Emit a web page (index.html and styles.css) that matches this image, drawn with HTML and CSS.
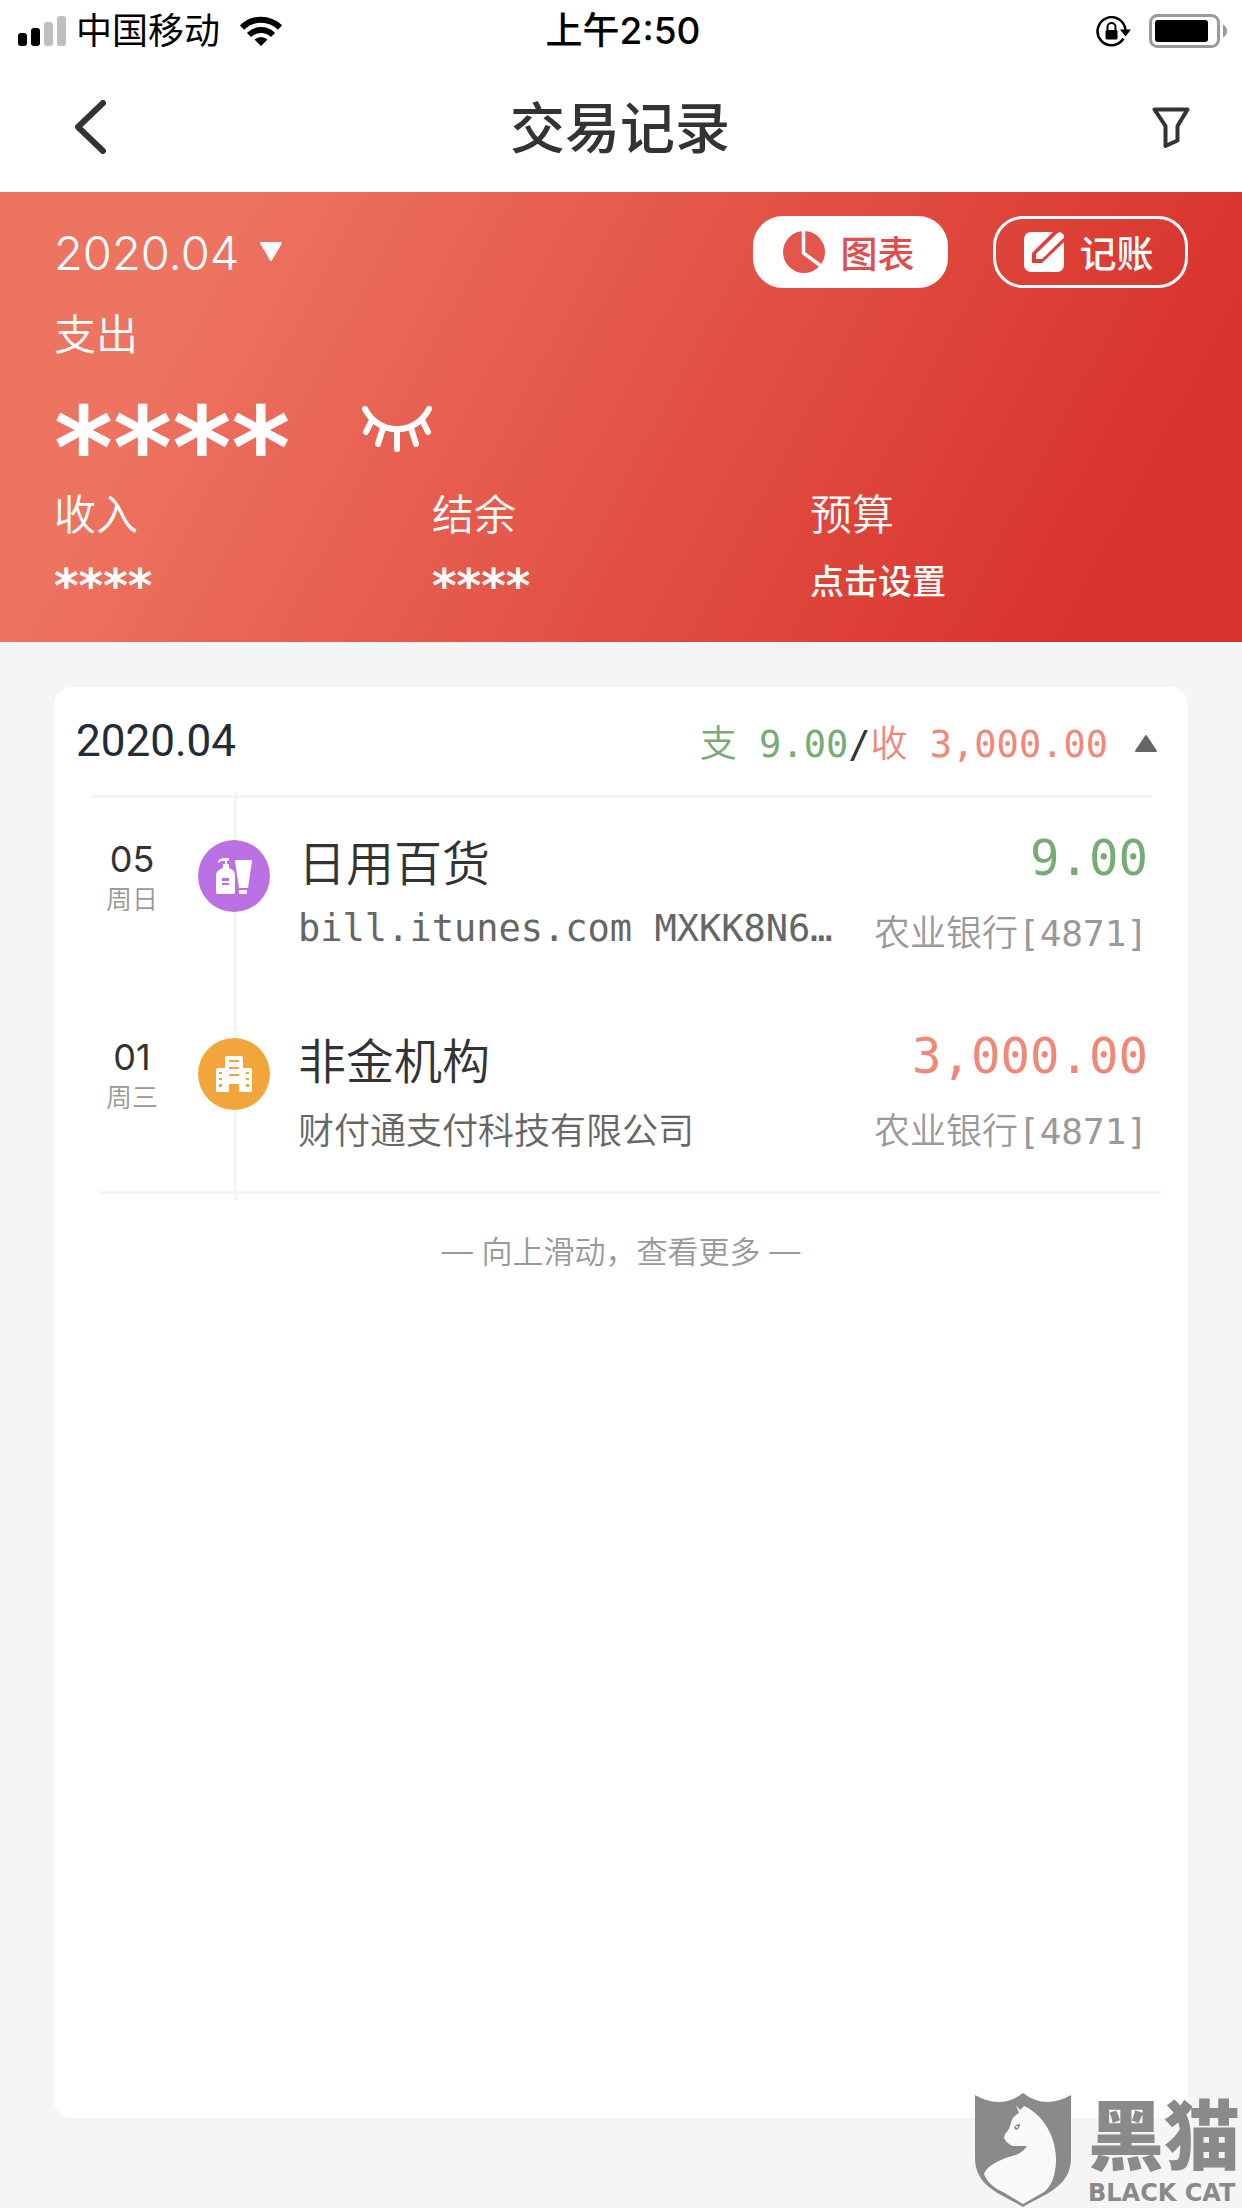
FILE: index.html
```
<!DOCTYPE html>
<html lang="zh-CN">
<head>
    <meta charset="UTF-8">
    <meta name="viewport" content="width=device-width, initial-scale=1.0">
    <title>交易记录</title>
    <link rel="stylesheet" href="styles.css">
</head>
<body>
    <div class="status-bar">
        <div class="status-left">
            <svg class="signal" width="49" height="30" viewBox="0 0 49 30">
                <rect x="0" y="17" width="9" height="13" rx="3"/>
                <rect x="13" y="12" width="9" height="18" rx="3"/>
                <rect x="26" y="6" width="9" height="24" rx="3" fill="#bfbfbf"/>
                <rect x="39" y="0" width="9" height="30" rx="3" fill="#bfbfbf"/>
            </svg>
            <span>中国移动</span>
            <svg class="wifi" width="42" height="30" viewBox="0 0 42 30">
                <path d="M2 11.500A27 27 0 0 1 40 11.500" fill="none" stroke="#000" stroke-width="6"/>
                <path d="M9 19A17 17 0 0 1 33 19" fill="none" stroke="#000" stroke-width="6"/>
                <path d="M14.500 23.500Q21 18.500 27.500 23.500L21 30Z"/>
            </svg>
        </div>
        <div class="status-time">上午2:50</div>
        <div class="status-right">
            <svg width="35" height="31" viewBox="0 0 35 31">
                <path d="M27.500 22.500A14 14 0 1 1 29.500 14" fill="none" stroke="#000" stroke-width="2.500"/>
                <path d="M24 13.500H35L29.500 20.500Z"/>
                <rect x="9.500" y="14" width="12" height="9.500" rx="1.500"/>
                <path d="M11.500 15V11a4 4 0 0 1 8 0v4" fill="none" stroke="#000" stroke-width="2"/>
            </svg>
            <svg width="79" height="34" viewBox="0 0 79 34">
                <rect x="1.500" y="1.500" width="68" height="31" rx="7" fill="none" stroke="#999" stroke-width="3"/>
                <rect x="6" y="6" width="53" height="22" rx="3"/>
                <path d="M74 10.500Q78 13 78 17T74 23.500Z" fill="#999"/>
            </svg>
        </div>
    </div>

    <header class="nav">
        <button class="icon-button" type="button" aria-label="返回">
            <svg width="31" height="54" viewBox="0 0 31 54">
                <path d="M28 3L3 27L28 51" fill="none" stroke="#333" stroke-width="6" stroke-linecap="round" stroke-linejoin="round"/>
            </svg>
        </button>
        <h1>交易记录</h1>
        <button class="icon-button" type="button" aria-label="筛选">
            <svg width="38" height="41" viewBox="0 0 38 41">
                <path d="M2.500 2.500H35.500L25.500 19V33.500L13.500 39V19Z" fill="none" stroke="#333" stroke-width="4" stroke-linejoin="round"/>
            </svg>
        </button>
    </header>

    <section class="overview">
        <div class="overview-top">
            <button class="month-picker" type="button">
                2020.04
                <svg width="24" height="20" viewBox="0 0 24 20"><path d="M2 1H22L12 18Z" fill="#fff" stroke="#fff" stroke-width="2" stroke-linejoin="round"/></svg>
            </button>
            <div class="actions">
                <button class="pill pill-solid" type="button">
                    <svg width="42" height="42" viewBox="0 0 42 42">
                        <circle cx="21" cy="21" r="21" fill="#e2564d"/>
                        <path d="M20.500 -1V22L38 35" fill="none" stroke="#fff" stroke-width="3.500"/>
                    </svg>
                    图表
                </button>
                <button class="pill pill-outline" type="button">
                    <svg width="40" height="40" viewBox="0 0 40 40">
                        <path d="M7 0H29L8 21V31H18L40 10V33a7 7 0 0 1-7 7H7a7 7 0 0 1-7-7V7a7 7 0 0 1 7-7Z" fill="#fff"/>
                        <path d="M12 27V22L33 1.500Q36 -1 39 2T38.500 7L18 27Z" fill="#fff"/>
                    </svg>
                    记账
                </button>
            </div>
        </div>
        <div class="label">支出</div>
        <div class="expense">
            <span class="stars-large">****</span>
            <button class="icon-button" type="button" aria-label="显示金额">
                <svg width="70" height="47" viewBox="0 0 70 47" fill="none" stroke="#fff" stroke-width="6" stroke-linecap="round">
                    <path d="M3 4C17 31 53 31 67 4"/>
                    <path d="M9 17L4 27M21 23L16 39M35 25V44M49 23L54 39M61 17L66 27"/>
                </svg>
            </button>
        </div>
        <div class="totals">
            <div>
                <div class="label">收入</div>
                <div class="stars">****</div>
            </div>
            <div>
                <div class="label">结余</div>
                <div class="stars">****</div>
            </div>
            <div>
                <div class="label">预算</div>
                <button class="set-budget" type="button">点击设置</button>
            </div>
        </div>
    </section>

    <main class="card">
        <div class="card-header">
            <h2>2020.04</h2>
            <div class="month-sum"><span class="out">支 9.00</span>/<span class="in">收 3,000.00</span></div>
            <button class="icon-button" type="button" aria-label="收起">
                <svg width="24" height="18" viewBox="0 0 24 18"><path d="M2 17H22L12 2Z" fill="#666" stroke="#666" stroke-width="2" stroke-linejoin="round"/></svg>
            </button>
        </div>
        <ul class="records">
            <li class="record">
                <div class="date">
                    <div class="day">05</div>
                    <div class="weekday">周日</div>
                </div>
                <div class="badge badge-purple">
                    <svg width="36" height="36" viewBox="0 0 36 36" fill="#fff">
                        <path d="M0 34V18C0 13 4 11 7 10V6H9V3H6Q4 3 3 5Q1 3 4 1Q6 0 12 0Q14 1 12 3H11V6H13V10C16 11 19 13 19 18V34Q19 36 17 36H2Q0 36 0 34Z"/>
                        <path d="M19 3Q19 2 20 2H35Q36 2 36 3L32 30H23ZM23 32H31V35Q31 36 30 36H24Q23 36 23 35Z"/>
                        <path d="M6 20H13V23H6ZM6 25H13V27H6Z" fill="#bb71e4"/>
                    </svg>
                </div>
                <div class="detail">
                    <div class="line">
                        <h3>日用百货</h3>
                        <span class="amount out">9.00</span>
                    </div>
                    <div class="line">
                        <span class="merchant latin">bill.itunes.com MXKK8N6…</span>
                        <span class="account">农业银行[4871]</span>
                    </div>
                </div>
            </li>
            <li class="record">
                <div class="date">
                    <div class="day">01</div>
                    <div class="weekday">周三</div>
                </div>
                <div class="badge badge-orange">
                    <svg width="36" height="36" viewBox="0 0 36 36" fill="#fff">
                        <path d="M9 2Q9 0 11 0H25Q27 0 27 2V12H34Q36 12 36 14V36H23V28H13V36H0V14Q0 12 2 12H9Z"/>
                        <path d="M13 4H23V6H13ZM13 11H23V13H13ZM13 18H23V20H13ZM3 16H6V18H3ZM3 22H6V24H3ZM3 28H6V31H3ZM30 16H33V18H30ZM30 22H33V24H30ZM30 28H33V31H30Z" fill="#f1a53b"/>
                    </svg>
                </div>
                <div class="detail">
                    <div class="line">
                        <h3>非金机构</h3>
                        <span class="amount in">3,000.00</span>
                    </div>
                    <div class="line">
                        <span class="merchant">财付通支付科技有限公司</span>
                        <span class="account">农业银行[4871]</span>
                    </div>
                </div>
            </li>
        </ul>
        <p class="more">— 向上滑动，查看更多 —</p>
    </main>

    <div class="watermark">
        <svg width="98" height="116" viewBox="0 0 98 116">
            <path d="M1 3Q27 18 49 1Q71 18 97 3V66C97 96 68 103 49 115C30 103 1 96 1 66Z" fill="#8b8989"/>
            <path d="M42 13L46 18L50 14C68 22 83 44 82 70C81 86 77 94 70 100L49 112L29 100C20 96 13 90 10 82C14 72 30 66 42 63Q49 60 53 54H39Q33 52 30 46L31 42C35 38 36 35 37 30Q39 24 45 21Z" fill="#fafafa"/>
            <path d="M40 36Q42 32 46 32Q46 37 42 38Z" fill="#8b8989"/>
            <circle cx="43" cy="35" r="1" fill="#fff"/>
        </svg>
        <div>
            <div class="brand">黑猫</div>
            <div class="brand-en">BLACK CAT</div>
        </div>
    </div>
</body>
</html>
```
FILE: styles.css
```
* {
    box-sizing: border-box;
}
body {
    font-family: Inter, "Noto Sans CJK SC", sans-serif;
    margin: 0;
    min-height: 100vh;
    display: flex;
    flex-direction: column;
    position: relative;
    background-color: #f5f5f5;
    color: #333;
}
h1, h2, h3, p, ul {
    margin: 0;
    padding: 0;
}
button {
    font: inherit;
    color: inherit;
    padding: 0;
    border: none;
    background: none;
    cursor: pointer;
}
svg {
    display: block;
}

/* status bar + title */
.status-bar {
    display: grid;
    grid-template-columns: 1fr auto 1fr;
    align-items: center;
    height: 62px;
    padding: 0 14px 0 18px;
    background-color: #fff;
    color: #000;
    font-size: 36px;
    line-height: 60px;
}
.status-left, .status-right {
    display: flex;
    align-items: center;
}
.status-left span {
    margin: 0 20px 0 9px;
}
.status-time {
    font-size: 37px;
    font-weight: 500;
}
.status-right {
    justify-content: flex-end;
    gap: 18px;
}
.nav {
    display: grid;
    grid-template-columns: 1fr auto 1fr;
    align-items: center;
    height: 130px;
    padding: 0 52px 0 50px;
    background-color: #fff;
}
.nav h1 {
    padding-top: 2px;
    font-size: 55px;
    font-weight: 500;
    line-height: 80px;
}
.nav .icon-button:first-child {
    justify-self: start;
    padding-left: 25px;
}
.nav .icon-button:last-child {
    justify-self: end;
}

/* red summary */
.overview {
    height: 450px;
    padding: 24px 54px 0;
    background: linear-gradient(118deg, #ee7462 15%, #d8332c 88%);
    color: #fff;
}
.overview-top {
    display: flex;
    justify-content: space-between;
    align-items: center;
    height: 72px;
    margin-bottom: 24px;
}
.month-picker {
    display: flex;
    align-items: center;
    gap: 20px;
    font-size: 47px;
    font-weight: 300;
}
.actions {
    display: flex;
    gap: 45px;
}
.pill {
    display: flex;
    justify-content: center;
    align-items: center;
    gap: 16px;
    width: 195px;
    height: 72px;
    padding-right: 4px;
    border: 3px solid #fff;
    border-radius: 30px;
    font-size: 37px;
    font-weight: 500;
}
.pill-solid {
    background-color: #fff;
    color: #e14c4c;
}
.label {
    font-size: 42px;
    font-weight: 350;
    line-height: 46px;
}
.expense {
    display: flex;
    align-items: center;
    gap: 72px;
    height: 134px;
    padding-top: 6px;
}
.stars-large {
    padding-top: 40px;
    font: bold 113px/60px "DejaVu Sans", sans-serif;
}
.totals {
    display: grid;
    grid-template-columns: repeat(3, 1fr);
}
.stars {
    margin-top: 20px;
    font: bold 47px/56px "DejaVu Sans", sans-serif;
}
.set-budget {
    margin-top: 20px;
    font-size: 34px;
    font-weight: 500;
    line-height: 48px;
}

/* record list */
.card {
    flex: 1;
    margin: 45px 54px 90px;
    background-color: #fff;
    border-radius: 18px;
}
.card-header {
    display: flex;
    align-items: center;
    height: 108px;
    padding: 0 30px 0 22px;
}
.card-header h2 {
    flex: 1;
    font-family: Roboto, sans-serif;
    font-size: 44px;
    font-weight: 400;
    color: #222b37;
}
.card-header .icon-button {
    padding-top: 4px;
}
.month-sum {
    margin-right: 26px;
    white-space: pre;
}
.month-sum, .merchant, .account, .amount {
    font-family: "DejaVu Sans Mono", "Noto Sans CJK SC", monospace;
    font-size: 37px;
    font-weight: 350;
}
.out {
    color: #77ab76;
}
.in {
    color: #f08777;
}
.records {
    position: relative;
    list-style: none;
    margin: 0 36px;
    border-top: 3px solid #f5f5f5;
}
/* timeline behind the badges */
.records::before {
    content: "";
    position: absolute;
    top: -6px;
    bottom: -6px;
    left: 144px;
    width: 3px;
    background-color: #f5f5f5;
}
.records::after {
    content: "";
    position: absolute;
    right: -9px;
    bottom: 0;
    left: 9px;
    height: 3px;
    background-color: #f5f5f5;
}
.record {
    display: flex;
    align-items: flex-start;
    height: 198px;
    padding-top: 42px;
}
.date {
    width: 84px;
    margin-right: 24px;
    text-align: center;
}
.day {
    font-size: 36px;
    line-height: 38px;
}
.weekday {
    color: #999;
    font-size: 26px;
    font-weight: 350;
    line-height: 44px;
}
.badge {
    position: relative;
    display: flex;
    justify-content: center;
    align-items: center;
    width: 72px;
    height: 72px;
    margin-right: 28px;
    border-radius: 50%;
}
.badge-purple {
    background-color: #bb71e4;
}
.badge-orange {
    background-color: #f1a53b;
}
.detail {
    flex: 1;
    min-width: 0;
    padding-right: 4px;
}
.line {
    display: flex;
    justify-content: space-between;
    align-items: center;
    height: 40px;
    margin-bottom: 30px;
    white-space: nowrap;
}
.line h3 {
    font-size: 48px;
    font-weight: 350;
}
.line .amount {
    font-size: 49px;
    padding-bottom: 4px;
}
.line .merchant, .line .account {
    font-size: 36px;
}
.line .merchant {
    color: #666;
}
.line .latin {
    font-size: 37px;
    padding-bottom: 4px;
}
.account {
    color: #999;
}
.more {
    margin-top: 36px;
    color: #999;
    font-size: 31px;
    font-weight: 350;
    line-height: 44px;
    text-align: center;
}

/* brand mark lies over the page corner */
.watermark {
    position: absolute;
    right: 2px;
    bottom: 0;
    display: flex;
    align-items: flex-end;
    gap: 16px;
    color: #8b8989;
}
.brand {
    font-size: 76px;
    font-weight: 900;
    line-height: 84px;
}
.brand-en {
    font: bold 24px/30px "DejaVu Sans", sans-serif;
    white-space: nowrap;
}
```
